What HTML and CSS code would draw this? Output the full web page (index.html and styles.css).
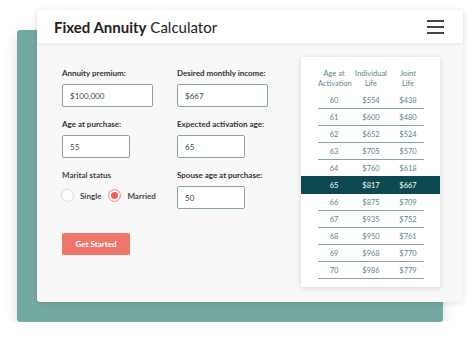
FILE: index.html
```html
<!DOCTYPE html>
<html lang="en">
<head>
    <meta charset="UTF-8">
    <meta name="viewport" content="width=device-width, initial-scale=1.0">
    <title>Fixed Annuity Calculator</title>
    <link rel="stylesheet" href="styles.css">
</head>
<body>
    <div class="backdrop">
    <div class="card">
        <header class="topbar">
            <h1><strong>Fixed Annuity</strong> Calculator</h1>
            <span class="burger"><i></i><i></i><i></i></span>
        </header>

        <div class="content">
            <form class="form">
                <div class="field">
                    <label>Annuity premium:</label>
                    <input type="text" class="wide" value="$100,000">
                </div>
                <div class="field">
                    <label>Desired monthly income:</label>
                    <input type="text" class="wide" value="$667">
                </div>
                <div class="field">
                    <label>Age at purchase:</label>
                    <input type="text" value="55">
                </div>
                <div class="field">
                    <label>Expected activation age:</label>
                    <input type="text" value="65">
                </div>
                <div class="field">
                    <label class="plain">Marital status</label>
                    <div class="radios">
                        <span class="radio"></span><span class="radio-label">Single</span>
                        <span class="radio checked"></span><span class="radio-label">Married</span>
                    </div>
                </div>
                <div class="field">
                    <label>Spouse age at purchase:</label>
                    <input type="text" value="50">
                </div>
                <button type="button">Get Started</button>
            </form>

            <div class="table">
                <div class="row head">
                    <span>Age at<br>Activation</span>
                    <span>Individual<br>Life</span>
                    <span>Joint<br>Life</span>
                </div>
                <div class="row"><span>60</span><span>$554</span><span>$438</span></div>
                <div class="row"><span>61</span><span>$600</span><span>$480</span></div>
                <div class="row"><span>62</span><span>$652</span><span>$524</span></div>
                <div class="row"><span>63</span><span>$705</span><span>$570</span></div>
                <div class="row"><span>64</span><span>$760</span><span>$618</span></div>
                <div class="row active"><span>65</span><span>$817</span><span>$667</span></div>
                <div class="row"><span>66</span><span>$875</span><span>$709</span></div>
                <div class="row"><span>67</span><span>$935</span><span>$752</span></div>
                <div class="row"><span>68</span><span>$950</span><span>$761</span></div>
                <div class="row"><span>69</span><span>$968</span><span>$770</span></div>
                <div class="row"><span>70</span><span>$986</span><span>$779</span></div>
            </div>
        </div>
    </div>
    </div>
</body>
</html>
```

FILE: styles.css
```css
body { margin: 0; padding: 30px 0 0 17px; background: #fff; font-family: Lato, "Noto Sans", sans-serif; }
.backdrop { display: flex; width: 426px; height: 292px; background: #74a9a2; border-radius: 3px;
  box-shadow: 0 5px 14px rgba(0,0,0,.14); }
.card { width: 426px; height: 292px; margin: -20px 0 0 20px; flex: none; background: #f8f8f8; border-radius: 3px;
  box-shadow: 0 1px 6px rgba(0,0,0,.12); }
.topbar { height: 33px; background: #fff; display: flex; align-items: center; justify-content: space-between;
  padding: 0 19px 0 17px; border-radius: 3px 3px 0 0; box-shadow: 0 2px 4px rgba(0,0,0,.06); position: relative; }
h1 { margin: 0; font-size: 15px; font-weight: 400; color: #222; }
h1 strong { font-weight: 700; }
.burger { display: flex; flex-direction: column; gap: 4px; width: 17px; }
.burger i { display: block; height: 2px; background: #444; }

.content { display: flex; justify-content: space-between; padding: 14px 23px 0 25px; }
.form { display: grid; grid-template-columns: 115px 100px; grid-auto-rows: 51px; padding-top: 11px; align-content: start; }
.field { display: flex; flex-direction: column; align-items: flex-start; }
label { font-size: 8px; font-weight: 700; color: #333; margin-bottom: 6px; white-space: nowrap; }
label.plain { color: #444; }
input { box-sizing: border-box; width: 68px; height: 23px; border: 1px solid #87a3a5; border-radius: 2px;
  background: #fff; font: 8px Lato, "Noto Sans", sans-serif; color: #444; padding: 0 7px; }
input.wide { width: 91px; }
.radios { display: flex; align-items: center; margin-top: 3px; margin-left: -1px; }
.radio { box-sizing: border-box; width: 13px; height: 13px; border-radius: 50%; border: 1px solid #d8d8d8; background: #fff; }
.radio.checked { border: 1px solid #f0a09a; background: #e95e57; box-shadow: inset 0 0 0 2px #fff; }
.radio-label { font-size: 8px; color: #444; margin: 0 7px 0 6px; font-weight: 700; }
button { grid-column: 1; margin-top: 12px; width: 68px; height: 22px; border: none; border-radius: 2px;
  background: #f0756c; color: #fff; font: 700 8px Lato, "Noto Sans", sans-serif; cursor: pointer; }

.table { width: 139px; height: 230px; box-sizing: border-box; background: #fff; padding: 12px 0 0;
  box-shadow: 0 1px 6px rgba(0,0,0,.14); }
.row { display: grid; grid-template-columns: 32px 42px 32px; margin: 0 16px 0 17px; height: 16px;
  border-bottom: 1px solid #86a4a6; align-items: center; text-align: center; font-size: 7.5px; color: #5b8589; }
.row.head { height: 23px; line-height: 10px; border-bottom: none; align-items: start; }
.row.active { margin: -1px 0 0; padding: 0 16px 0 17px; height: 18px; border-bottom: none; background: #0c4950; color: #fff; }
```
